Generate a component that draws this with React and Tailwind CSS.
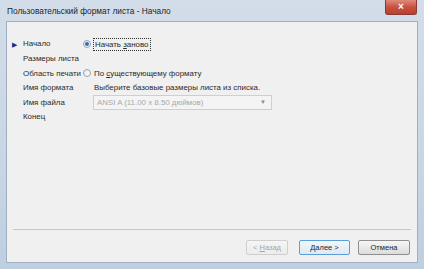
import React from 'react';

const font = { fontFamily: '"Liberation Sans", Arial, sans-serif' };

function Radio({ checked }) {
  return (
    <span className="flex h-[8px] w-[8px] shrink-0 items-center justify-center rounded-full border border-[#9aa3ad] bg-gradient-to-br from-[#e4e7ea] to-[#ffffff]">
      {checked && <span className="h-[4px] w-[4px] rounded-full bg-[#2d6fb8]" />}
    </span>
  );
}

function Button({ children, disabled = false, primary = false }) {
  return (
    <div
      className={`flex h-[15px] items-center justify-center whitespace-nowrap rounded-[2px] border bg-gradient-to-b text-[7.5px] ${
        disabled
          ? 'w-[42px] border-[#cfcfcf] from-[#f5f5f5] to-[#ececec] text-[#a6a6a6]'
          : primary
            ? 'w-[51px] border-[#5a9fd6] from-[#f1f7fc] to-[#dde9f3] text-[#1e1e1e]'
            : 'w-[52px] border-[#8f8f8f] from-[#f6f6f6] to-[#dcdcdc] text-[#1e1e1e]'
      }`}
    >
      {children}
    </div>
  );
}

export default function App() {
  const steps = ['Начало', 'Размеры листа', 'Область печати', 'Имя формата', 'Имя файла', 'Конец'];

  return (
    <div
      className="flex h-[269px] w-[424px] flex-col bg-gradient-to-b from-[#d3dde9] via-[#cad7e5] to-[#bfcfe0]"
      style={font}
    >
      {/* Title bar */}
      <div className="flex h-[21px] shrink-0 items-start">
        <div className="pl-[7px] pt-[5px] text-[8.3px] text-[#1e1e1e]">
          Пользовательский формат листа - Начало
        </div>
        <div className="ml-auto mr-[7px] flex h-[15px] w-[32px] items-center justify-center rounded-b-[3px] border border-t-0 border-[#8a3a32] bg-gradient-to-b from-[#e08a7c] via-[#c8513f] to-[#b8402e] text-[10px] font-bold leading-none text-white">
          ×
        </div>
      </div>

      {/* Client area */}
      <div className="mx-[6px] mb-[6px] flex flex-1 flex-col border border-[#9fb0c4] bg-[#f0f0f0] text-[7.9px] text-[#2a2a2a]">
        <div className="flex pt-[15px]">
          {/* Steps */}
          <div className="flex w-[76px] shrink-0 flex-col whitespace-nowrap pl-[5px]">
            {steps.map((s, i) => (
              <div key={s} className="flex h-[14.6px] items-center">
                <span className="w-[11px] shrink-0 text-[7px] leading-none text-[#1a2e8a]">{i === 0 ? '▶' : ''}</span>
                <span>{s}</span>
              </div>
            ))}
          </div>

          {/* Page */}
          <div className="flex flex-col whitespace-nowrap">
            <div className="flex h-[14.6px] items-center gap-[2px]">
              <Radio checked />
              <span className="border border-dotted border-[#333] pl-[1px] pr-[2px] leading-[11px]">
                Начать <u>з</u>аново
              </span>
            </div>
            <div className="h-[14.6px]" />
            <div className="flex h-[14.6px] items-center gap-[3px]">
              <Radio />
              <span>
                По <u>с</u>уществующему формату
              </span>
            </div>
            <div className="flex h-[14.6px] items-center pl-[11px]">
              Выберите базовые размеры листа из списка.
            </div>
            <div className="flex h-[14.6px] items-center pl-[10px]">
              <div className="flex h-[15px] w-[179px] items-center justify-between border border-[#cfcfcf] bg-[#f4f4f4] pl-[3px] pr-[5px] text-[#a9a9a9]">
                <span>ANSI A (11.00 x 8.50 дюймов)</span>
                <span className="text-[6px] text-[#8a8a8a]">▼</span>
              </div>
            </div>
          </div>
        </div>

        <div className="mt-auto">
          <div className="mx-[6px] border-t border-[#c6c6c6]" />
          <div className="flex h-[32px] items-start justify-end gap-[8px] pr-[7px] pt-[10px]">
            <div className="mr-[3px]">
              <Button disabled>
                {'<\u00a0'}
                <u>Н</u>азад
              </Button>
            </div>
            <Button primary>Далее &gt;</Button>
            <Button>Отмена</Button>
          </div>
        </div>
      </div>
    </div>
  );
}
